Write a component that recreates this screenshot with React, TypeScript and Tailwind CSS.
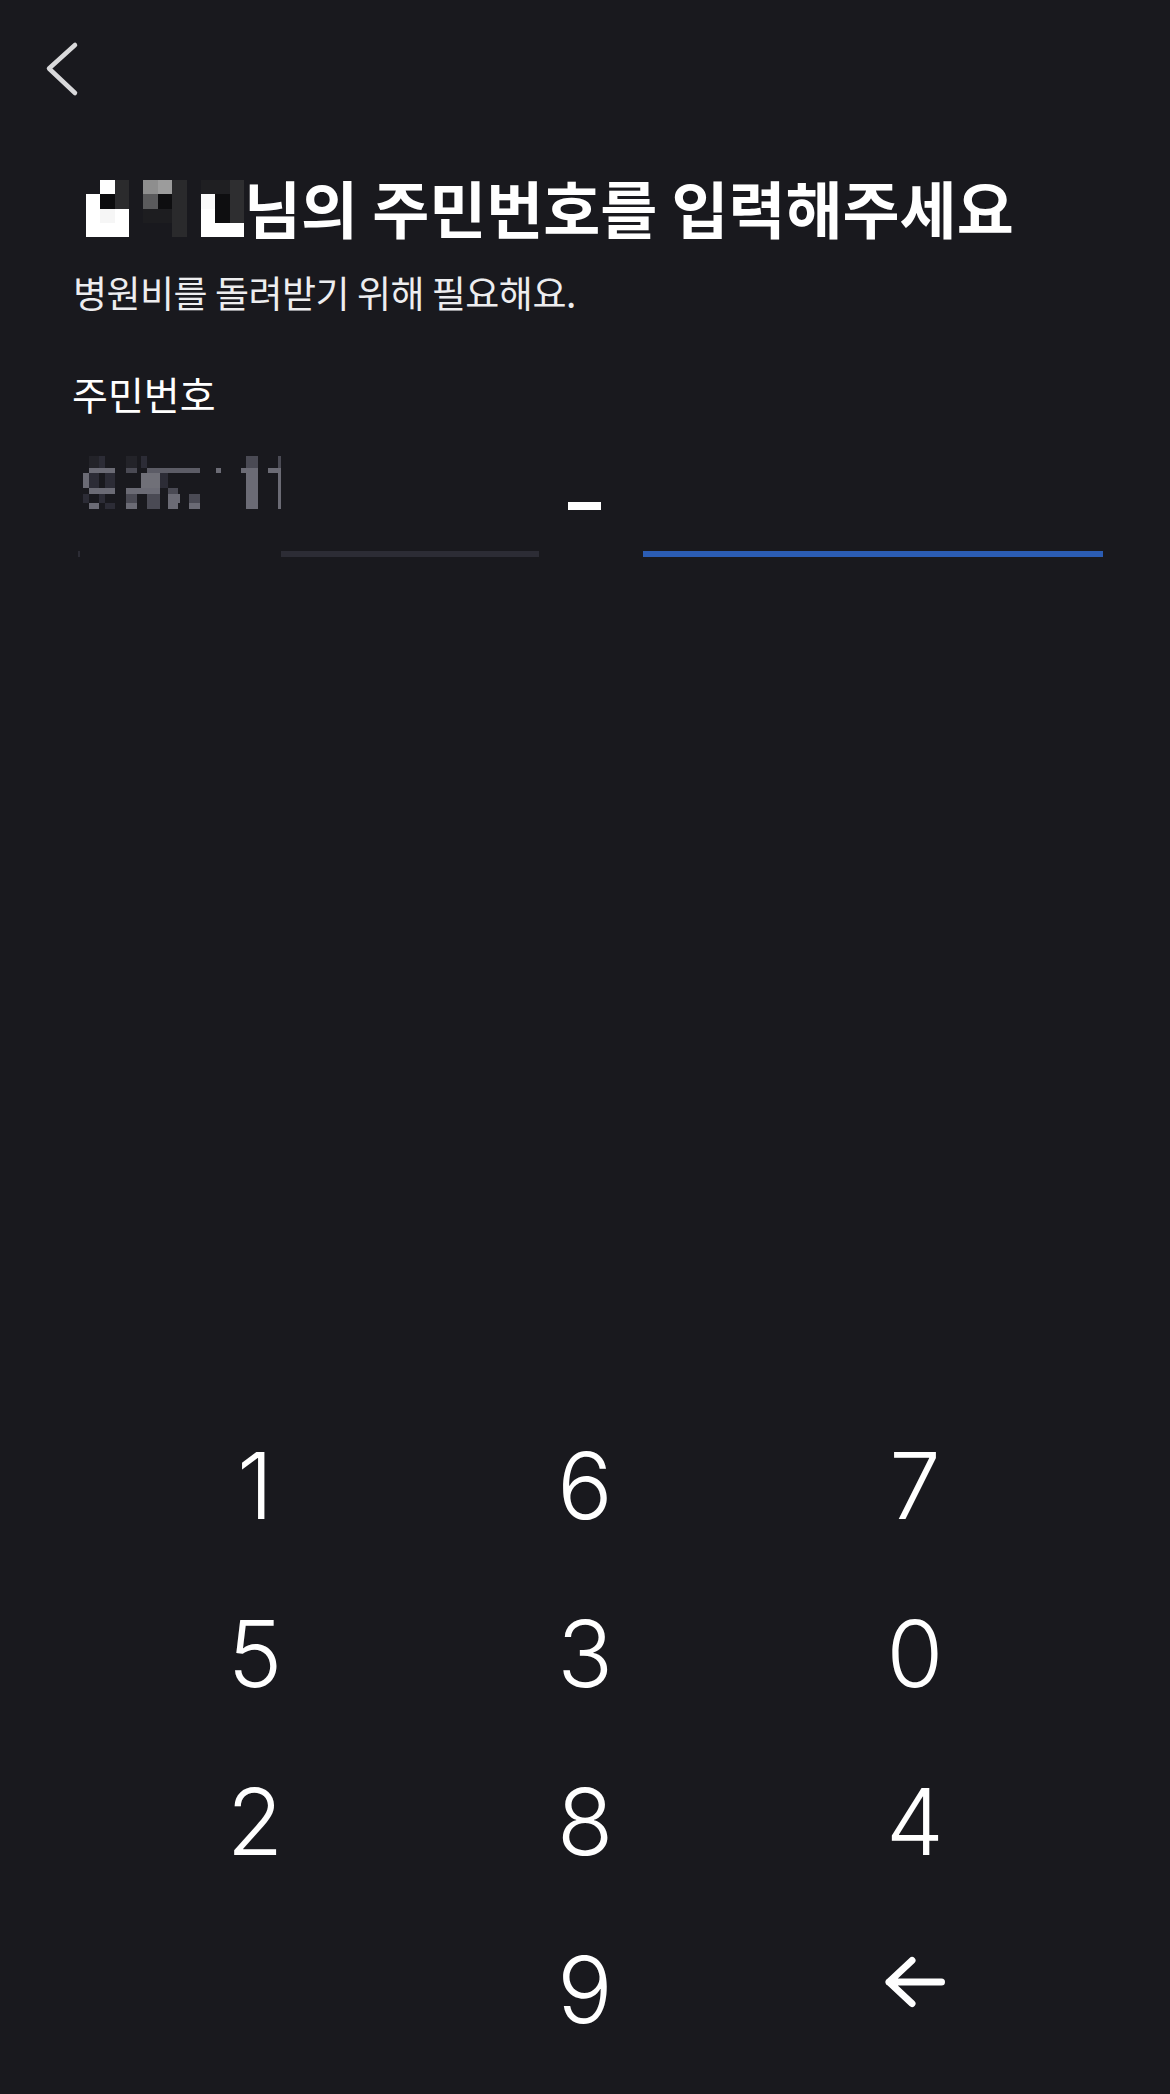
import React from 'react';

const W = '#ffffff';

// pixelated name in the title (11 x 4 cells)
const nameCells: (string | null)[][] = [
  [null, W, '#2b2b2d', null, '#8e8e8e', '#9c9c9c', '#2a2a2c', null, '#1f1f22', '#1f1f22', '#2e2e30'],
  [W, '#0c0c0e', '#2b2b2d', null, '#5a5a5c', '#0e0e10', '#2a2a2c', null, '#fafafa', '#0e0e10', '#2e2e30'],
  [W, '#f6f6f6', W, null, '#1d1d20', '#1d1d20', '#2a2a2c', null, W, '#0e0e10', '#2e2e30'],
  [W, W, W, null, null, null, '#2a2a2c', null, W, W, W],
];

const g1 = '#6b6b75';
const g2 = '#4a4a54';
const g3 = '#2c2c36';
const g4 = '#232329';

// pixelated front half of the number
const valueRects: [number, number, number, number, string][] = [
  [6, 0, 10, 12, g4], [16, 0, 6, 12, g3], [43, 0, 11, 12, g4], [58, 0, 6, 12, g3], [163, 0, 12, 12, g2], [195, 0, 3, 12, g2],
  [6, 12, 26, 5, g1], [43, 12, 11, 5, g2], [64, 12, 53, 5, '#5c5c66'], [133, 12, 5, 5, g1], [158, 12, 17, 5, g1], [185, 12, 13, 5, g1],
  [0, 17, 6, 15, g1], [6, 17, 10, 15, g3], [22, 17, 10, 15, g3], [58, 17, 19, 15, '#707078'], [77, 17, 8, 15, g3], [163, 17, 12, 15, g1], [195, 17, 3, 15, g1],
  [6, 32, 26, 6, g1], [43, 32, 34, 6, g1], [85, 32, 10, 6, g2], [163, 32, 12, 6, g1], [195, 32, 3, 6, g1],
  [0, 38, 6, 9, g3], [16, 38, 6, 9, g3], [43, 38, 11, 9, g2], [64, 38, 13, 9, g2], [85, 38, 12, 9, g1], [106, 38, 11, 9, g2], [163, 38, 12, 9, g1], [195, 38, 3, 9, g1],
  [6, 47, 10, 6, g1], [22, 47, 10, 6, g3], [43, 47, 11, 6, g1], [64, 47, 13, 6, g2], [85, 47, 10, 6, g1], [106, 47, 11, 6, g1], [163, 47, 12, 6, g1], [195, 47, 3, 6, g1],
];

const keys = ['1', '6', '7', '5', '3', '0', '2', '8', '4', '', '9', 'back'];

const BackspaceIcon = () => (
  <svg width="64" height="52" viewBox="0 0 64 52" fill="none" className="mb-[16px]">
    <path d="M58.5 26H6M29 4.5L6 26l23 21.5" stroke="#ffffff" strokeWidth="7" strokeLinecap="round" strokeLinejoin="round" />
  </svg>
);

export default function App() {
  return (
    <div className="w-[1170px] h-[2094px] bg-[#19191e] flex flex-col font-['Noto_Sans_CJK_KR',sans-serif] text-white">
      {/* Header */}
      <div className="pl-[44px] pt-[39px]">
        <svg width="40" height="60" viewBox="0 0 40 60" fill="none">
          <path d="M31 6L5 29.5 31 54" stroke="#d9d9db" strokeWidth="4.5" strokeLinecap="round" strokeLinejoin="round" />
        </svg>
      </div>

      {/* Title */}
      <div className="pl-[86px] mt-[77px] flex items-start">
        <svg width="158" height="57" viewBox="0 0 11 4" preserveAspectRatio="none" shapeRendering="crispEdges" className="mt-[4px] shrink-0">
          {nameCells.map((row, y) =>
            row.map((c, x) => (c ? <rect key={`${x}-${y}`} x={x} y={y} width="1.02" height="1.02" fill={c} /> : null))
          )}
        </svg>
        <h1 className="text-[62px] leading-none font-bold tracking-[0px] whitespace-nowrap">님의 주민번호를 입력해주세요</h1>
      </div>

      <p className="pl-[73px] mt-[36px] text-[37px] leading-none tracking-[-0.5px] text-[#ededef]">병원비를 돌려받기 위해 필요해요.</p>

      {/* Field */}
      <p className="pl-[72px] mt-[63px] text-[39px] leading-none">주민번호</p>

      <div className="mt-[43px] flex items-start">
        <div className="ml-[78px] w-[461px] flex flex-col">
          <div className="h-[95px] pl-[5px]">
            <svg width="200" height="53" viewBox="0 0 200 53" shapeRendering="crispEdges">
              {valueRects.map(([x, y, w, h, c], i) => (
                <rect key={i} x={x} y={y} width={w} height={h} fill={c} />
              ))}
            </svg>
          </div>
          <div className="h-[6px] flex">
            <div className="w-[2px] bg-[#2c2c35]" />
            <div className="w-[201px]" />
            <div className="flex-1 bg-[#2c2c35]" />
          </div>
        </div>
        <div className="ml-[29px] mt-[46px] w-[33px] h-[8px] bg-white" />
        <div className="ml-[42px] w-[460px] pt-[95px]">
          <div className="h-[6px] bg-[#2b5cb3]" />
        </div>
      </div>

      {/* Keypad */}
      <div className="mt-auto mb-[20px] w-[990px] mx-auto grid grid-cols-3">
        {keys.map((k, i) => (
          <div key={i} className="h-[168px] flex items-center justify-center">
            {k === 'back' ? (
              <BackspaceIcon />
            ) : (
              <span className="font-['Inter',sans-serif] text-[92px] leading-none font-light">{k}</span>
            )}
          </div>
        ))}
      </div>
    </div>
  );
}
